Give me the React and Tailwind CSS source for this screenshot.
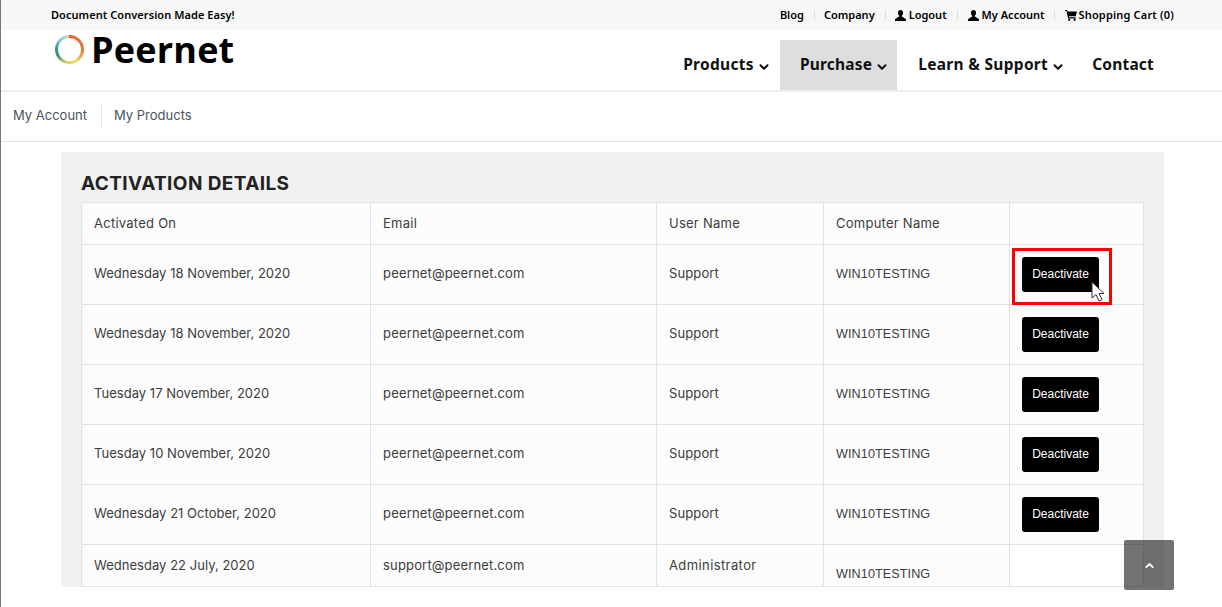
import { ChevronDown, ChevronUp } from 'lucide-react'

const rows = [
  { date: 'Wednesday 18 November, 2020', email: 'peernet@peernet.com', user: 'Support' },
  { date: 'Wednesday 18 November, 2020', email: 'peernet@peernet.com', user: 'Support' },
  { date: 'Tuesday 17 November, 2020', email: 'peernet@peernet.com', user: 'Support' },
  { date: 'Tuesday 10 November, 2020', email: 'peernet@peernet.com', user: 'Support' },
  { date: 'Wednesday 21 October, 2020', email: 'peernet@peernet.com', user: 'Support' },
]

const cell = 'border border-[#e2e2e2] px-3 align-middle'
const winCell = "text-[12.6px] tracking-[0.1px] [font-family:'Liberation_Sans',sans-serif]"

function UserIcon() {
  return (
    <svg width="11" height="11" viewBox="0 0 12 12" fill="#000" className="mr-[3px]">
      <path d="M6 0C4.2 0 3.2 1.3 3.2 3c0 1.300.5 2.500 1.300 3.200v1L1 9.300c-.6.300-1 .7-1 1.300V12h12v-1.400c0-.6-.4-1-1-1.300L7.500 7.200v-1C8.300 5.500 8.800 4.300 8.800 3 8.800 1.300 7.800 0 6 0z" />
    </svg>
  )
}

function CartIcon() {
  return (
    <svg width="12" height="11" viewBox="0 0 13 12" fill="#000" className="mr-[1px]">
      <path d="M0 0h2.300l.4 1.500H13l-1.300 5.300H4.100l.3 1.200h7.300v1.200H3.400L1.400 1.200H0z" />
      <circle cx="4.500" cy="10.700" r="1.200" />
      <circle cx="10.500" cy="10.700" r="1.200" />
    </svg>
  )
}

function Logo() {
  return (
    <div className="flex h-[29px] w-[29px] shrink-0 items-center justify-center rounded-full bg-[conic-gradient(#e2672f_20deg,#e87a38_95deg,#e8dc62_150deg,#d9d65e_195deg,#2e8f72_245deg,#2f9c86_275deg,#8cc8d8_315deg,#c5d8d0_350deg,#e2672f_380deg)]">
      <div className="h-[23px] w-[23px] rounded-full bg-white" />
    </div>
  )
}

function NavItem({ label, active, arrow, className }) {
  return (
    <a className={`flex h-[50px] items-center pl-5 text-[15.5px] font-bold text-[#111] ${className} ${active ? 'bg-[#dedede]' : ''}`}>
      {label}
      {arrow && <ChevronDown size={14} strokeWidth={3.5} className="ml-[3px] mt-[3px]" />}
    </a>
  )
}

function DeactivateButton() {
  return (
    <button className="h-[35px] w-[77px] rounded-[3px] bg-black pb-[2px] text-[12px] text-white [font-family:'Liberation_Sans',sans-serif]">
      Deactivate
    </button>
  )
}

export default function App() {
  return (
    <div className="relative h-[607px] w-[1222px] overflow-hidden border-l border-[#777] bg-white [font-family:Inter,sans-serif]">
      <div className="flex h-[30px] items-center justify-between bg-[#f7f7f7] pl-[50px] pr-[48px] text-[11px] font-semibold text-black [font-family:'Noto_Sans',sans-serif]">
        <span className="tracking-[0.06px]">Document Conversion Made Easy!</span>
        <div className="flex items-center">
          <a>Blog</a>
          <span className="ml-[10px] mr-[9px] h-[10px] w-px bg-[#ddd]" />
          <a>Company</a>
          <span className="ml-[10px] mr-[9px] h-[10px] w-px bg-[#ddd]" />
          <a className="flex items-center"><UserIcon />Logout</a>
          <span className="mx-[10px] h-[10px] w-px bg-[#ddd]" />
          <a className="flex items-center"><UserIcon />My Account</a>
          <span className="mx-[10px] h-[10px] w-px bg-[#ddd]" />
          <a className="flex items-center tracking-[0.18px]"><CartIcon />Shopping Cart (0)</a>
        </div>
      </div>

      <div className="flex h-[62px] justify-between border-b-2 border-[#eeeeee] pl-[54px] pr-[47px]">
        <div className="flex h-[38px] items-center gap-[7px]">
          <Logo />
          <span className="mt-[2px] text-[36px] leading-none font-bold tracking-[0.2px] text-black [font-family:'Open_Sans',sans-serif]">Peernet</span>
        </div>
        <nav className="mt-[10px] flex [font-family:'Noto_Sans',sans-serif]">
          <NavItem label="Products" arrow className="pr-[9px] tracking-[0.3px]" />
          <NavItem label="Purchase" arrow active className="pr-2 tracking-[0.2px]" />
          <NavItem label="Learn & Support" arrow className="ml-px pr-[7px] tracking-[0.3px]" />
          <NavItem label="Contact" className="pr-[21px] tracking-[0.2px]" />
        </nav>
      </div>

      <div className="flex h-[50px] items-center border-b border-[#e2e2e2] pb-[2px] pl-3 text-[13px] text-[#4a5560]">
        <a className="pr-[14px]">My Account</a>
        <a className="flex h-[22px] items-center border-l border-[#e2e2e2] pl-3">My Products</a>
      </div>

      <div className="relative ml-[60px] mt-[10px] h-[435px] w-[1103px] bg-[#f1f1f1] px-5">
        <h2 className="h-[50px] pt-[20px] text-[19px] leading-[24px] font-bold tracking-[0.4px] text-[#222]">ACTIVATION DETAILS</h2>
        <table className="w-[1063px] table-fixed border-collapse bg-[#fcfcfc] text-[13px] text-[#3c3c3c]">
          <thead>
            <tr className="h-[42px] text-left tracking-[0.25px]">
              <th className={`${cell} w-[289px] font-normal`}>Activated On</th>
              <th className={`${cell} w-[286px] font-normal`}>Email</th>
              <th className={`${cell} w-[167px] font-normal`}>User Name</th>
              <th className={`${cell} w-[186px] font-normal`}>Computer Name</th>
              <th className={`${cell} font-normal`} />
            </tr>
          </thead>
          <tbody>
            {rows.map((row, i) => (
              <tr key={i} className="h-[60px]">
                <td className={`${cell} pb-[2px] tracking-[0.03px]`}>{row.date}</td>
                <td className={`${cell} pb-[2px] tracking-[0.17px]`}>{row.email}</td>
                <td className={`${cell} pb-[2px] tracking-[0.12px]`}>{row.user}</td>
                <td className={`${cell} pb-[1px] ${winCell}`}>WIN10TESTING</td>
                <td className={cell}>
                  <DeactivateButton />
                </td>
              </tr>
            ))}
            <tr className="h-[42px]">
              <td className={`${cell} tracking-[0.03px]`}>Wednesday 22 July, 2020</td>
              <td className={`${cell} tracking-[0.17px]`}>support@peernet.com</td>
              <td className={`${cell} tracking-[0.4px]`}>Administrator</td>
              <td className={`${cell} pt-[17px] ${winCell}`}>WIN10TESTING</td>
              <td className={`${cell} bg-white`} />
            </tr>
          </tbody>
        </table>
      </div>

      <div className="absolute left-[1011px] top-[248px] h-[57px] w-[100px] border-[3px] border-[#f00]" />
      <svg width="15" height="22" viewBox="0 0 15 22" className="absolute left-[1090px] top-[281px]">
        <path d="M1 1v16l4-3.500 3 6.500 3-1.500-3-6h5z" fill="#fff" stroke="#333" strokeWidth="1" />
      </svg>

      <div className="absolute left-[1123px] top-[540px] flex h-[50px] w-[50px] items-center justify-center rounded-[2px] bg-[#000]/55">
        <ChevronUp size={13} strokeWidth={3.5} className="text-white" />
      </div>
    </div>
  )
}
